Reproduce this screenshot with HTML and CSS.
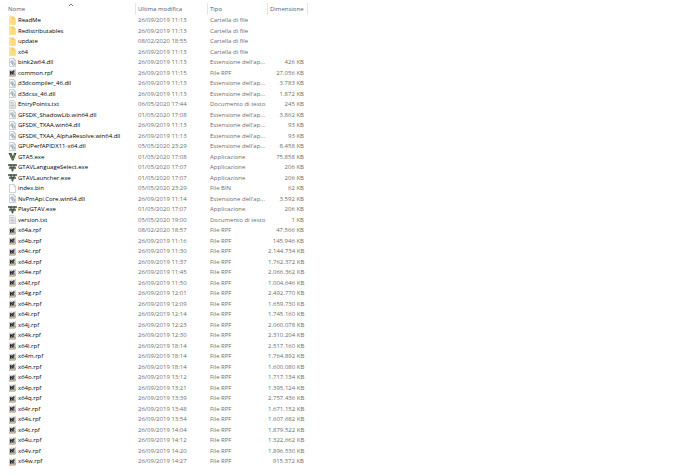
FILE: index.html
```html
<!DOCTYPE html>
<html lang="it">
<head>
  <meta charset="UTF-8">
  <meta name="viewport" content="width=device-width, initial-scale=1.0">
  <title>Grand Theft Auto V</title>
  <link rel="stylesheet" href="styles.css">
</head>
<body>
  <!-- Icons used by the rows -->
  <svg class="sprite" aria-hidden="true">
    <symbol id="folder" viewBox="0 0 18 18">
      <path d="M2 1h10l1 3h2v13H2z" fill="#f3cf62"/>
      <path d="M2 1h5v16H2z" fill="#ffe391"/>
      <path d="M6 6h9v11H6z" fill="#fbdb7b"/>
    </symbol>
    <symbol id="dll" viewBox="0 0 18 18">
      <path d="M3 1h9l3 4v12H3z" fill="#fafafa" stroke="#a3a7aa"/>
      <path d="M12 1v4h3" fill="none" stroke="#a3a7aa"/>
      <circle cx="8" cy="8" r="2.5" fill="#dce8f0" stroke="#8199aa" stroke-width="1.5"/>
      <circle cx="11" cy="12" r="2.5" fill="#dce8f0" stroke="#8199aa" stroke-width="1.5"/>
    </symbol>
    <symbol id="txt" viewBox="0 0 18 18">
      <path d="M3 1h9l3 4v12H3z" fill="#f4f4f4" stroke="#a3a7aa"/>
      <path d="M5 5h6M5 8h8M5 11h8M5 14h8" stroke="#a9aeb2" stroke-width="1.5"/>
    </symbol>
    <symbol id="bin" viewBox="0 0 18 18">
      <path d="M3 1h9l3 4v12H3z" fill="#fdfdfd" stroke="#a3a7aa"/>
      <path d="M12 1v4h3" fill="none" stroke="#a3a7aa"/>
    </symbol>
    <symbol id="rpf" viewBox="0 0 18 18">
      <path d="M2 2h12l2-1v13l-2 3H2z" fill="#d3d1ca"/>
      <path d="M2 15h11l3-5v5l-2 2H2z" fill="#bda478"/>
      <path d="M4 6h9v8H4z" fill="#80848b"/>
      <path d="M5 13V7l5 5V6h3" fill="none" stroke="#22252b" stroke-width="2"/>
      <path d="M2 3h12" stroke="#eeeeea" stroke-width="2"/>
    </symbol>
    <symbol id="gta" viewBox="0 0 18 18">
      <path d="M1 2h6l3 7 2-7h5l-6 15H8z" fill="#3c4c36"/>
      <path d="M4 4h2l3 9 4-9h2l-5 11H8z" fill="#6f9a5a"/>
    </symbol>
    <symbol id="launcher" viewBox="0 0 18 18">
      <path d="M0 2h18v4H0zM2 8h14v4H2z" fill="#777a78"/>
      <path d="M3 3h4l2 6 3-6h3l-5 14H8z" fill="#3f5740"/>
      <path d="M1 7h16M4 12h10" stroke="#a5aaa5"/>
    </symbol>
  </svg>

  <table class="file-list">
    <colgroup>
      <col class="col-name">
      <col class="col-date">
      <col class="col-type">
      <col class="col-size">
    </colgroup>
    <thead>
      <tr>
        <th aria-sort="ascending"><button type="button">Nome</button><svg class="sort" viewBox="0 0 6 4" aria-hidden="true"><path d="M1 3l2-2 2 2"/></svg></th>
        <th><button type="button">Ultima modifica</button></th>
        <th><button type="button">Tipo</button></th>
        <th><button type="button">Dimensione</button></th>
      </tr>
    </thead>
    <tbody>
      <tr><td><svg><use href="#folder"/></svg>ReadMe</td><td>26/09/2019 11:13</td><td>Cartella di file</td><td></td></tr>
      <tr><td><svg><use href="#folder"/></svg>Redistributables</td><td>26/09/2019 11:13</td><td>Cartella di file</td><td></td></tr>
      <tr><td><svg><use href="#folder"/></svg>update</td><td>08/02/2020 18:55</td><td>Cartella di file</td><td></td></tr>
      <tr><td><svg><use href="#folder"/></svg>x64</td><td>26/09/2019 11:13</td><td>Cartella di file</td><td></td></tr>
      <tr><td><svg><use href="#dll"/></svg>bink2w64.dll</td><td>26/09/2019 11:13</td><td>Estensione dell'ap...</td><td>426 KB</td></tr>
      <tr><td><svg><use href="#rpf"/></svg>common.rpf</td><td>26/09/2019 11:15</td><td>File RPF</td><td>27.056 KB</td></tr>
      <tr><td><svg><use href="#dll"/></svg>d3dcompiler_46.dll</td><td>26/09/2019 11:13</td><td>Estensione dell'ap...</td><td>3.783 KB</td></tr>
      <tr><td><svg><use href="#dll"/></svg>d3dcsx_46.dll</td><td>26/09/2019 11:13</td><td>Estensione dell'ap...</td><td>1.872 KB</td></tr>
      <tr><td><svg><use href="#txt"/></svg>EntryPoints.txt</td><td>06/05/2020 17:44</td><td>Documento di testo</td><td>245 KB</td></tr>
      <tr><td><svg><use href="#dll"/></svg>GFSDK_ShadowLib.win64.dll</td><td>01/05/2020 17:08</td><td>Estensione dell'ap...</td><td>3.862 KB</td></tr>
      <tr><td><svg><use href="#dll"/></svg>GFSDK_TXAA.win64.dll</td><td>26/09/2019 11:13</td><td>Estensione dell'ap...</td><td>93 KB</td></tr>
      <tr><td><svg><use href="#dll"/></svg>GFSDK_TXAA_AlphaResolve.win64.dll</td><td>26/09/2019 11:13</td><td>Estensione dell'ap...</td><td>93 KB</td></tr>
      <tr><td><svg><use href="#dll"/></svg>GPUPerfAPIDX11-x64.dll</td><td>05/05/2020 23:29</td><td>Estensione dell'ap...</td><td>8.458 KB</td></tr>
      <tr><td><svg><use href="#gta"/></svg>GTA5.exe</td><td>01/05/2020 17:08</td><td>Applicazione</td><td>75.858 KB</td></tr>
      <tr><td><svg><use href="#launcher"/></svg>GTAVLanguageSelect.exe</td><td>01/05/2020 17:07</td><td>Applicazione</td><td>206 KB</td></tr>
      <tr><td><svg><use href="#launcher"/></svg>GTAVLauncher.exe</td><td>01/05/2020 17:07</td><td>Applicazione</td><td>206 KB</td></tr>
      <tr><td><svg><use href="#bin"/></svg>index.bin</td><td>05/05/2020 23:29</td><td>File BIN</td><td>62 KB</td></tr>
      <tr><td><svg><use href="#dll"/></svg>NvPmApi.Core.win64.dll</td><td>26/09/2019 11:14</td><td>Estensione dell'ap...</td><td>3.592 KB</td></tr>
      <tr><td><svg><use href="#launcher"/></svg>PlayGTAV.exe</td><td>01/05/2020 17:07</td><td>Applicazione</td><td>206 KB</td></tr>
      <tr><td><svg><use href="#txt"/></svg>version.txt</td><td>05/05/2020 19:00</td><td>Documento di testo</td><td>1 KB</td></tr>
      <tr><td><svg><use href="#rpf"/></svg>x64a.rpf</td><td>08/02/2020 18:57</td><td>File RPF</td><td>47.566 KB</td></tr>
      <tr><td><svg><use href="#rpf"/></svg>x64b.rpf</td><td>26/09/2019 11:16</td><td>File RPF</td><td>145.946 KB</td></tr>
      <tr><td><svg><use href="#rpf"/></svg>x64c.rpf</td><td>26/09/2019 11:30</td><td>File RPF</td><td>2.144.734 KB</td></tr>
      <tr><td><svg><use href="#rpf"/></svg>x64d.rpf</td><td>26/09/2019 11:37</td><td>File RPF</td><td>1.762.372 KB</td></tr>
      <tr><td><svg><use href="#rpf"/></svg>x64e.rpf</td><td>26/09/2019 11:45</td><td>File RPF</td><td>2.066.362 KB</td></tr>
      <tr><td><svg><use href="#rpf"/></svg>x64f.rpf</td><td>26/09/2019 11:50</td><td>File RPF</td><td>1.004.646 KB</td></tr>
      <tr><td><svg><use href="#rpf"/></svg>x64g.rpf</td><td>26/09/2019 12:01</td><td>File RPF</td><td>2.492.770 KB</td></tr>
      <tr><td><svg><use href="#rpf"/></svg>x64h.rpf</td><td>26/09/2019 12:09</td><td>File RPF</td><td>1.659.730 KB</td></tr>
      <tr><td><svg><use href="#rpf"/></svg>x64i.rpf</td><td>26/09/2019 12:14</td><td>File RPF</td><td>1.745.160 KB</td></tr>
      <tr><td><svg><use href="#rpf"/></svg>x64j.rpf</td><td>26/09/2019 12:23</td><td>File RPF</td><td>2.060.078 KB</td></tr>
      <tr><td><svg><use href="#rpf"/></svg>x64k.rpf</td><td>26/09/2019 12:30</td><td>File RPF</td><td>2.310.204 KB</td></tr>
      <tr><td><svg><use href="#rpf"/></svg>x64l.rpf</td><td>26/09/2019 18:14</td><td>File RPF</td><td>2.517.160 KB</td></tr>
      <tr><td><svg><use href="#rpf"/></svg>x64m.rpf</td><td>26/09/2019 18:14</td><td>File RPF</td><td>1.764.892 KB</td></tr>
      <tr><td><svg><use href="#rpf"/></svg>x64n.rpf</td><td>26/09/2019 18:14</td><td>File RPF</td><td>1.600.080 KB</td></tr>
      <tr><td><svg><use href="#rpf"/></svg>x64o.rpf</td><td>26/09/2019 13:12</td><td>File RPF</td><td>1.717.134 KB</td></tr>
      <tr><td><svg><use href="#rpf"/></svg>x64p.rpf</td><td>26/09/2019 13:21</td><td>File RPF</td><td>1.395.124 KB</td></tr>
      <tr><td><svg><use href="#rpf"/></svg>x64q.rpf</td><td>26/09/2019 13:39</td><td>File RPF</td><td>2.757.436 KB</td></tr>
      <tr><td><svg><use href="#rpf"/></svg>x64r.rpf</td><td>26/09/2019 13:48</td><td>File RPF</td><td>1.671.152 KB</td></tr>
      <tr><td><svg><use href="#rpf"/></svg>x64s.rpf</td><td>26/09/2019 13:54</td><td>File RPF</td><td>1.607.682 KB</td></tr>
      <tr><td><svg><use href="#rpf"/></svg>x64t.rpf</td><td>26/09/2019 14:04</td><td>File RPF</td><td>1.879.522 KB</td></tr>
      <tr><td><svg><use href="#rpf"/></svg>x64u.rpf</td><td>26/09/2019 14:12</td><td>File RPF</td><td>1.322.662 KB</td></tr>
      <tr><td><svg><use href="#rpf"/></svg>x64v.rpf</td><td>26/09/2019 14:20</td><td>File RPF</td><td>1.896.530 KB</td></tr>
      <tr><td><svg><use href="#rpf"/></svg>x64w.rpf</td><td>26/09/2019 14:27</td><td>File RPF</td><td>915.372 KB</td></tr>
    </tbody>
  </table>
</body>
</html>
```
FILE: styles.css
```css
body {
  margin: 0;
  padding-top: 3px;
  background-color: #fff;
  font-family: "Open Sans", "Segoe UI", sans-serif;
  font-size: 6px;
  color: #6d6d6d;
}
.sprite {
  display: none;
}
.file-list {
  table-layout: fixed;
  width: 308px;
  border-collapse: separate;
  border-spacing: 0;
  white-space: nowrap;
}
.col-name {
  width: 136px;
}
.col-date {
  width: 72px;
}
.col-type {
  width: 60px;
}
.col-size {
  width: 40px;
}

/* header */
.file-list th {
  position: relative;
  height: 12px;
  padding: 0 0 0 2px;
  border-right: 1px solid #e5e5e5;
  text-align: left;
  font-weight: normal;
}
.file-list th:first-child {
  padding-left: 8px;
}
.file-list button {
  display: block;
  padding: 0;
  border: none;
  background: none;
  font: inherit;
  line-height: 12px;
  color: #4c607a;
  cursor: pointer;
}
.sort {
  position: absolute;
  top: 0;
  left: 50%;
  width: 6px;
  height: 4px;
}
.sort path {
  fill: none;
  stroke: #777;
}

/* rows */
.file-list td {
  height: 10px;
  padding: 0 0 0 2px;
  line-height: 10px;
}
.file-list tr:nth-child(even) td {
  height: 11px;
}
.file-list td:first-child {
  padding-left: 8px;
  color: #000;
}
.file-list td:last-child {
  padding: 0 4px 0 0;
  text-align: right;
}
.file-list td svg {
  width: 9px;
  height: 9px;
  margin-right: 1px;
  vertical-align: middle;
}
```
